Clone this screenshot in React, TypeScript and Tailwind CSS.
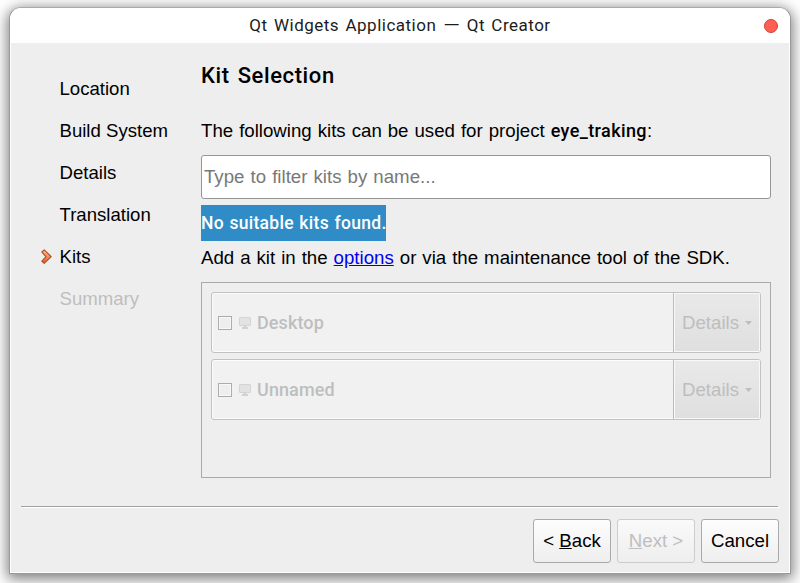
import clsx from 'clsx';

const steps = ['Location', 'Build System', 'Details', 'Translation', 'Kits', 'Summary'];
const kits = ['Desktop', 'Unnamed'];

function StepArrow() {
  return (
    <svg className="block" width="11" height="16" viewBox="0 0 11 16" fill="none">
      <defs>
        <linearGradient id="arrow" x1="0" y1="0" x2="0" y2="1">
          <stop offset="0" stopColor="#ffc878" />
          <stop offset="1" stopColor="#ee552c" />
        </linearGradient>
      </defs>
      <path
        d="M0.9 3 3.2 0.9 10.2 7.6 3.2 14.3 0.9 12.2 5 7.6Z"
        fill="url(#arrow)"
        stroke="#b4502a"
        strokeWidth="1.2"
        strokeLinejoin="round"
      />
    </svg>
  );
}

function MonitorIcon() {
  return (
    <svg className="block" width="12" height="12" viewBox="0 0 12 12">
      <rect x="0.5" y="0.5" width="11" height="8" rx="0.5" fill="#e2e2e2" stroke="#d4d4d4" />
      <path d="M4.5 9h3v1H9v2H3v-2h1.5z" fill="#d2d2d2" />
    </svg>
  );
}

function KitRow({ name }: { name: string }) {
  return (
    <div className="flex h-[61px] overflow-hidden rounded-[3px] border border-[#c2c2c2] bg-[#f1f1f1] shadow-[inset_0_0_0_1px_#fcfcfc]">
      <div className="flex flex-1 items-center pl-[6px]">
        <span className="h-[14px] w-[14px] border border-[#acacac] bg-[#eeeeee] shadow-[inset_0_0_0_1px_#f8f8f8]" />
        <span className="ml-[7px]">
          <MonitorIcon />
        </span>
        <span className="ml-[6px] font-[Roboto] text-[18px] font-medium tracking-[0.1px] text-[#bebebe]">
          {name}
        </span>
      </div>
      <div className="flex w-[87px] items-center border-l border-[#bcbcbc] bg-linear-to-b from-[#e9e9e9] to-[#dfdfdf] pt-px pl-[8px] text-[#bebebe] shadow-[inset_0_0_0_1px_#f8f8f8]">
        Details
        <svg className="ml-[6px]" width="7" height="4" viewBox="0 0 7 4">
          <path d="M0 0h7L3.5 4z" fill="#bebebe" />
        </svg>
      </div>
    </div>
  );
}

export default function App() {
  return (
    <div className="h-[583px] w-[800px] overflow-hidden bg-white px-[9px] pt-[7px] font-['Liberation_Sans',Arial,sans-serif] text-[18.67px] leading-[22px] text-black">
      <div className="flex h-[567px] w-[782px] flex-col overflow-hidden rounded-t-[12px] border border-t-[#aaaaaa] border-r-[#999999] border-b-[#999999] border-l-[#999999] bg-[#eeeeee] shadow-[0_3px_14px_2px_rgba(0,0,0,0.5)]">
        <header className="flex h-[35px] shrink-0 items-center bg-white">
          <h1 className="flex-1 pb-[2px] pl-[26px] text-center font-[Roboto] text-[17px] font-normal tracking-[0.5px] [word-spacing:1.6px] text-[#1c1c1c]">
            Qt Widgets Application{' '}
            <span className="inline-block origin-center scale-x-125 px-[2px]">—</span> Qt Creator
          </h1>
          <button className="mr-[12px] h-[14px] w-[14px] rounded-full border border-[#cf4037] bg-[#ff5f52]" />
        </header>

        <div className="flex flex-1 flex-col border-x border-b border-white">
          <div className="flex h-[463px]">
            <nav className="w-[190px] pt-[25px] text-[18.6px]">
              {steps.map((step) => (
                <div key={step} className="flex h-[42px] items-center">
                  <span className="w-[48.5px] pl-[30px]">{step === 'Kits' && <StepArrow />}</span>
                  <span className={clsx(step === 'Summary' && 'text-[#bebebe]')}>{step}</span>
                </div>
              ))}
            </nav>

            <main className="w-[570px]">
              <h2 className="h-[77px] pt-[20px] font-[Roboto] text-[22px] leading-[26px] font-medium tracking-[0.6px] [word-spacing:2px]">
                Kit Selection
              </h2>
              <p className="h-[35px] whitespace-nowrap [word-spacing:0.8px]">
                The following kits can be used for project{' '}
                <b className="font-[Roboto] text-[18px] font-medium tracking-[0.4px]">eye_traking</b>:
              </p>
              <input
                className="block h-[44px] w-full rounded-[3px] border border-[#969696] bg-white pl-[2px] [word-spacing:0.9px] placeholder:text-[#787878]"
                placeholder="Type to filter kits by name..."
              />
              <div className="mt-[6px] flex h-[36px] w-[185px] items-center bg-[#308cc6] font-[Roboto] text-[17.5px] font-medium tracking-[0.3px] whitespace-nowrap [word-spacing:0.8px] text-white">
                No suitable kits found.
              </div>
              <p className="mt-[6px] h-[35px] whitespace-nowrap [word-spacing:0.8px]">
                Add a kit in the <a className="text-[#0000ee] underline">options</a> or via the
                maintenance tool of the SDK.
              </p>
              <div className="flex h-[196px] flex-col gap-[6px] border border-[#aaaaaa] px-[9px] pt-[9px]">
                {kits.map((kit) => (
                  <KitRow key={kit} name={kit} />
                ))}
              </div>
            </main>
          </div>

          <footer className="ml-[10px] w-[757px] border-t border-[#a0a0a0]">
            <div className="-mr-px flex h-[56px] justify-end gap-[6px] border-t border-white pt-[11px]">
              <button className="h-[44px] w-[78px] rounded-[3px] border border-[#aaaaaa] bg-linear-to-b from-[#fdfdfd] to-[#eeeeee]">
                &lt; <span className="underline">B</span>ack
              </button>
              <button className="h-[44px] w-[78px] rounded-[3px] border border-[#cccccc] bg-linear-to-b from-[#fafafa] to-[#eeeeee] text-[#bebebe]">
                <span className="underline">N</span>ext &gt;
              </button>
              <button className="h-[44px] w-[78px] rounded-[3px] border border-[#aaaaaa] bg-linear-to-b from-[#fdfdfd] to-[#eeeeee]">
                Cancel
              </button>
            </div>
          </footer>
        </div>
      </div>
    </div>
  );
}
